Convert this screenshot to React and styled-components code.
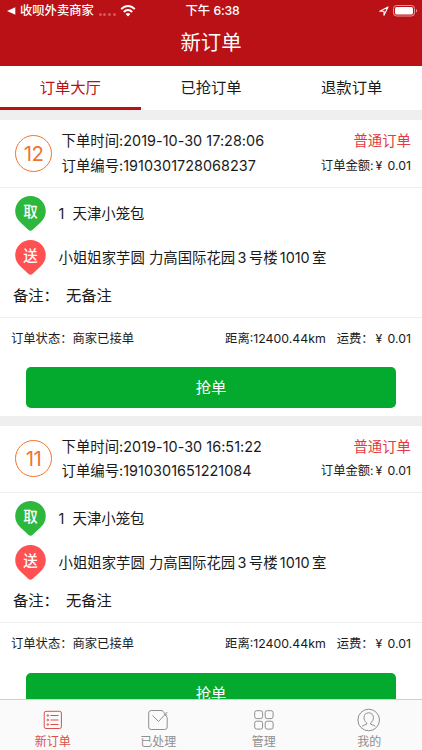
import styled, { createGlobalStyle } from 'styled-components';

const orders = [
  {
    id: '1910301728068237',
    number: 12,
    time: '2019-10-30 17:28:06',
  },
  {
    id: '1910301651221084',
    number: 11,
    time: '2019-10-30 16:51:22',
  },
];

const tabs = ['订单大厅', '已抢订单', '退款订单'];

const Pin = ({ color, label }) => (
  <PinWrapper>
    <svg width="31" height="35" viewBox="0 0 31 35">
      <path
        fill={color}
        d="M15.5 0C7 0 .2 6.800.2 15.200c0 4.900 2.300 8.800 5.800 11.700l7.300 6.900c1.300 1.200 3.100 1.200 4.400 0l7.300-6.900c3.500-2.900 5.800-6.800 5.800-11.700C30.800 6.800 24 0 15.500 0z"
      />
    </svg>
    <span>{label}</span>
  </PinWrapper>
);

const StatusBar = () => (
  <StatusWrapper>
    <div className="left">
      <svg width="9" height="8" viewBox="0 0 9 8">
        <path d="M0 4L8.300 0.300V7.700z" fill="#fff" />
      </svg>
      <StatusText>收呗外卖商家</StatusText>
      <Dots>
        <i />
        <i />
        <i />
        <i />
      </Dots>
      <svg width="16" height="12" viewBox="0 0 16 12" fill="none" stroke="#fff">
        <path d="M1.200 4.200C5-.1 11-.1 14.800 4.200" strokeWidth="2" />
        <path d="M3.800 7C6.200 4.400 9.800 4.400 12.200 7" strokeWidth="2" />
        <path d="M8 11.500L5.600 9C7 7.800 9 7.800 10.400 9z" fill="#fff" stroke="none" />
      </svg>
    </div>
    <StatusText>
      下午 <b>6:38</b>
    </StatusText>
    <div className="right">
      <svg width="10" height="10" viewBox="0 0 10 10">
        <path
          d="M.8 5.200L9 .9 5 9.200V5.200z"
          fill="none"
          stroke="#fff"
          strokeWidth="1.100"
          strokeLinejoin="round"
        />
      </svg>
      <svg width="25" height="12" viewBox="0 0 25 12">
        <rect x=".5" y=".5" width="21" height="10.500" rx="3" fill="none" stroke="#e39a9c" />
        <rect x="2" y="2" width="18" height="7.500" rx="1.500" fill="#fff" />
        <path d="M23 4v3.600c1.400-.5 1.400-3.100 0-3.600z" fill="#e39a9c" />
      </svg>
    </div>
  </StatusWrapper>
);

const Order = ({ order }) => (
  <Card>
    <CardHeader>
      <Badge>{order.number}</Badge>
      <HeaderLines>
        <HeaderLine>
          <Main>
            下单时间:<Num>{order.time}</Num>
          </Main>
          <Kind>普通订单</Kind>
        </HeaderLine>
        <HeaderLine>
          <Main>
            订单编号:<Num>{order.id}</Num>
          </Main>
          <Small>
            订单金额:<Yen>¥</Yen>0.01
          </Small>
        </HeaderLine>
      </HeaderLines>
    </CardHeader>
    <CardBody>
      <Place>
        <Pin color="#2db83d" label="取" />
        <p>
          <Count>1</Count>天津小笼包
        </p>
      </Place>
      <Place>
        <Pin color="#ff5152" label="送" />
        <p>
          小姐姐家芋圆 力高国际花园<Inset>3</Inset>号楼<Inset>1010</Inset>室
        </p>
      </Place>
      <Remark>
        <span>备注：</span>
        <span>无备注</span>
      </Remark>
    </CardBody>
    <CardInfo>
      <Small>订单状态：商家已接单</Small>
      <div>
        <Small>距离:12400.44km</Small>
        <Small>
          运费：<Yen>¥</Yen>0.01
        </Small>
      </div>
    </CardInfo>
    <GrabButton>抢单</GrabButton>
  </Card>
);

const navItems = [
  {
    label: '新订单',
    active: true,
    icon: (
      <>
        <rect x="2.200" y="2.300" width="17.200" height="17.200" rx="1.800" />
        <path d="M8.500 6.500h8M8.500 11h8M8.500 15.500h8" />
        <circle cx="5.800" cy="6.500" r=".8" />
        <circle cx="5.800" cy="11" r=".8" />
        <circle cx="5.800" cy="15.500" r=".8" />
      </>
    ),
  },
  {
    label: '已处理',
    icon: (
      <>
        <path d="M15.500 1.500H4.200a2.500 2.500 0 0 0-2.500 2.500v14a2.500 2.500 0 0 0 2.500 2.500h13.500a2.500 2.500 0 0 0 2.500-2.500V8.500l-3-4" />
        <path d="M5.500 6.500l6 6L20.300 3M15 1.500l5 5" />
      </>
    ),
  },
  {
    label: '管理',
    icon: (
      <>
        <rect x="1.700" y="1.700" width="7.900" height="7.900" rx="2" />
        <rect x="12.200" y="1.700" width="7.900" height="7.900" rx="2" />
        <rect x="1.700" y="12.200" width="7.900" height="7.900" rx="2" />
        <rect x="12.200" y="12.200" width="7.900" height="7.900" rx="2" />
      </>
    ),
  },
  {
    label: '我的',
    icon: (
      <>
        <circle cx="10.700" cy="11" r="10.800" />
        <path d="M8.700 13.800C6.700 12.600 6 10.500 6 8.600 6 5.700 8 3.800 10.700 3.800s4.700 1.900 4.700 4.800c0 1.900-.7 4-2.700 5.200v1.400c1.500.8 3.300.9 4.600 2M8.700 13.800v1.400c-1.500.8-3.300.9-4.600 2" />
      </>
    ),
  },
];

const App = () => (
  <Page>
    <GlobalStyle />
    <Header>
      <StatusBar />
      <h1>新订单</h1>
    </Header>
    <Tabs>
      {tabs.map((tab, i) => (
        <Tab key={tab} $active={i === 0}>
          {tab}
        </Tab>
      ))}
    </Tabs>
    <OrderList>
      {orders.map(order => (
        <Order key={order.id} order={order} />
      ))}
    </OrderList>
    <Nav>
      {navItems.map(({ label, icon, active }) => (
        <NavItem key={label} $active={active}>
          <svg width="22" height="22" viewBox="0 0 22 22" overflow="visible">
            {icon}
          </svg>
          <span>{label}</span>
        </NavItem>
      ))}
    </Nav>
  </Page>
);
export default App;

const GlobalStyle = createGlobalStyle`
  * {
    box-sizing: border-box;
  }
  body {
    margin: 0;
    overflow: hidden;
    font-family: Inter, 'Noto Sans CJK SC', sans-serif;
    color: #1a1a1a;
  }
  h1, p {
    margin: 0;
    font-weight: 400;
  }
  svg {
    display: block;
    flex: none;
  }
`;

const Page = styled.div`
  display: flex;
  flex-direction: column;
  height: 750px;
  background: #efefef;
  white-space: nowrap;
`;

const Header = styled.header`
  flex: none;
  height: 65.500px;
  background: #ba1116;
  color: #fff;
  h1 {
    text-align: center;
    font-size: 20.400px;
    line-height: 44px;
  }
`;

const StatusWrapper = styled.div`
  display: grid;
  grid-template-columns: 1fr auto 1fr;
  align-items: center;
  height: 21px;
  padding: 0 4px 0 7px;
  .left,
  .right {
    display: flex;
    align-items: center;
    gap: 4px;
  }
  .right {
    justify-content: flex-end;
  }
`;

const StatusText = styled.span`
  font-size: 12.300px;
  line-height: 20px;
  font-weight: 500;
  b {
    font-weight: 500;
    letter-spacing: -0.200px;
  }
`;

const Dots = styled.span`
  display: flex;
  gap: 1.700px;
  padding: 7px 0 0 1px;
  i {
    width: 3px;
    height: 3px;
    border-radius: 50%;
    background: #d05a5e;
  }
`;

const Tabs = styled.nav`
  flex: none;
  display: grid;
  grid-template-columns: repeat(3, 1fr);
  height: 44.500px;
  background: #fff;
`;

const Tab = styled.div`
  height: 44.500px;
  border-bottom: 3px solid ${({ $active }) => ($active ? '#ba1116' : '#fff')};
  color: ${({ $active }) => ($active ? '#ba1116' : '#1a1a1a')};
  text-align: center;
  font-size: 15.300px;
  line-height: 44px;
`;

const OrderList = styled.main`
  flex: 1;
  min-height: 0;
  overflow: hidden;
  display: flex;
  flex-direction: column;
  gap: 10px;
  padding-top: 10px;
`;

const Card = styled.section`
  flex: none;
  height: 295.500px;
  background: #fff;
`;

const CardHeader = styled.div`
  display: flex;
  align-items: center;
  height: 67.500px;
  padding: 0 11px 0 15px;
  border-bottom: 1px solid #efefef;
`;

const Badge = styled.div`
  width: 37px;
  height: 37px;
  margin-right: 9.500px;
  border: 1px solid #f2742f;
  border-radius: 50%;
  color: #f2742f;
  text-align: center;
  font-size: 20.400px;
  line-height: 35px;
  letter-spacing: -0.500px;
`;

const HeaderLines = styled.div`
  flex: 1;
`;

const HeaderLine = styled.div`
  display: flex;
  justify-content: space-between;
  align-items: center;
  height: 24.500px;
`;

const Main = styled.span`
  font-size: 14.400px;
  line-height: 24px;
`;

const Num = styled.span`
  letter-spacing: 0.040px;
`;

const Kind = styled.span`
  color: #e23a40;
  font-size: 14.400px;
  line-height: 24px;
`;

const Small = styled.span`
  font-size: 12.300px;
  line-height: 20px;
`;

const Yen = styled.span`
  display: inline-block;
  width: 14px;
  padding-left: 2px;
`;

const CardBody = styled.div`
  height: 130px;
  padding: 8px 13px 0 15px;
  border-bottom: 1px solid #efefef;
`;

const Place = styled.div`
  display: flex;
  height: 44px;
  p {
    margin-left: 12.500px;
    font-size: 14.400px;
    line-height: 36px;
  }
`;

const PinWrapper = styled.div`
  position: relative;
  width: 31px;
  height: 35px;
  span {
    position: absolute;
    inset: 0;
    color: #fff;
    text-align: center;
    font-size: 14.500px;
    font-weight: 500;
    line-height: 32px;
  }
`;

const Count = styled.span`
  display: inline-block;
  width: 14px;
`;

const Inset = styled.span`
  margin: 0 2.300px;
`;

const Remark = styled.div`
  display: flex;
  gap: 7px;
  margin-left: -2px;
  font-size: 15.300px;
  line-height: 24px;
`;

const CardInfo = styled.div`
  display: flex;
  justify-content: space-between;
  align-items: center;
  height: 40px;
  padding: 2px 11px 0 11px;
  div {
    display: flex;
    gap: 11px;
  }
`;

const GrabButton = styled.div`
  height: 40.500px;
  margin: 9.500px 26px 0;
  border-radius: 5px;
  background: #04aa2d;
  color: #fff;
  text-align: center;
  font-size: 15.300px;
  line-height: 41px;
`;

const Nav = styled.footer`
  flex: none;
  display: grid;
  grid-template-columns: repeat(4, 1fr);
  height: 51px;
  border-top: 1px solid #cfcfcf;
  background: #fafafa;
`;

const NavItem = styled.div`
  display: flex;
  flex-direction: column;
  align-items: center;
  padding-top: 9px;
  color: ${({ $active }) => ($active ? '#d9504c' : '#8f8f8f')};
  font-size: 12px;
  line-height: 21px;
  svg {
    fill: none;
    stroke: currentColor;
    stroke-width: 1;
  }
`;
